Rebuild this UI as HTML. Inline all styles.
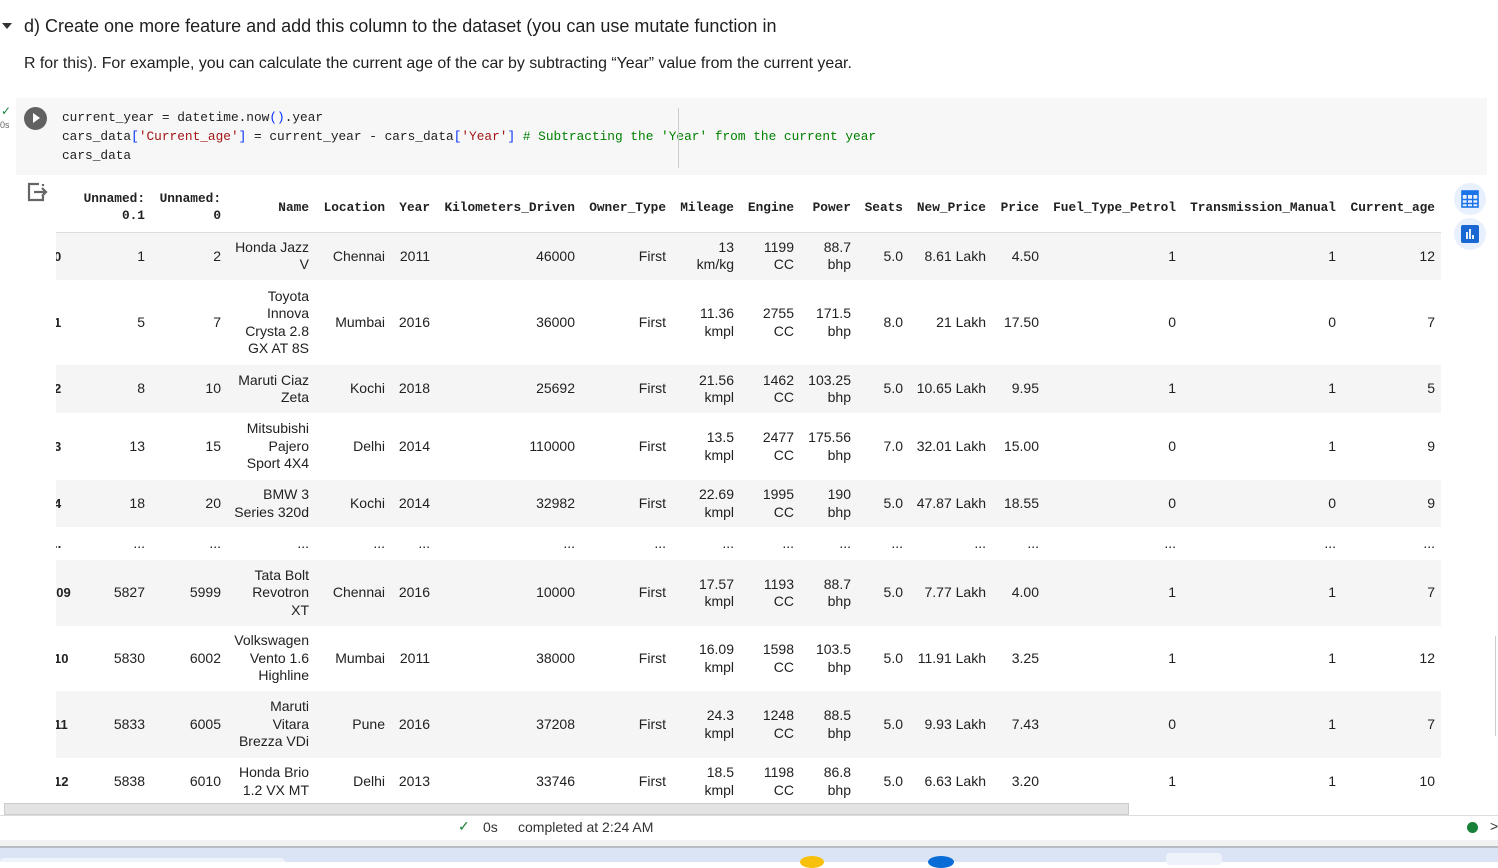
<!DOCTYPE html>
<html><head><meta charset="utf-8"><style>
*{margin:0;padding:0;box-sizing:border-box}
body{width:1498px;height:862px;overflow:hidden;background:#fff;font-family:"Liberation Sans",sans-serif;color:#212121;position:relative}
.abs{position:absolute}
.h1{left:24px;top:16px;font-size:18px;color:#1f1f1f;white-space:nowrap}
.h2{left:24px;top:55px;font-size:15.9px;color:#1f1f1f;white-space:nowrap}
.tri{left:2px;top:23px;width:0;height:0;border-left:5px solid transparent;border-right:5px solid transparent;border-top:6px solid #333}
.code{left:16px;top:98px;width:1471px;height:77px;background:#f7f7f7}
.codetxt{left:62px;top:108px;font-family:"Liberation Mono",monospace;font-size:12.8px;line-height:19px;color:#212121;white-space:pre}
.s{color:#a31515}.b{color:#0431fa}.c{color:#008000}
.vline{left:678px;top:108px;width:1px;height:60px;background:#ccc}
.run{left:24px;top:107px;width:23px;height:23px;border-radius:50%;background:#616161}
.run:after{content:"";position:absolute;left:9px;top:6px;border-left:7px solid #fff;border-top:5.5px solid transparent;border-bottom:5.5px solid transparent}
.tbl{left:56px;top:190px;width:1386px;height:615px;overflow:hidden}
table{border-collapse:collapse;table-layout:fixed;width:1405px;margin-left:-20px}
td,th{text-align:right;vertical-align:middle;padding:0;font-size:14px;line-height:17.5px;white-space:nowrap}
th{font-family:"Liberation Mono",monospace;font-size:12.8px;font-weight:bold;line-height:17px;vertical-align:middle;padding-bottom:7px;border-bottom:1px solid #ddd;color:#212121}
tr.g td{background:#f5f5f5}
td.i{text-align:left;font-weight:bold;padding-left:18px;font-size:13px}
</style></head><body>
<div class="abs tri"></div>
<div class="abs h1">d) Create one more feature and add this column to the dataset (you can use mutate function in</div>
<div class="abs h2">R for this). For example, you can calculate the current age of the car by subtracting “Year” value from the current year.</div>
<div class="abs code"></div>
<div class="abs" style="left:1px;top:104px;color:#188038;font-size:12px">✓</div>
<div class="abs" style="left:0px;top:120px;color:#666;font-size:9px">0s</div>
<div class="abs run"></div>
<div class="abs codetxt">current_year = datetime.now<span class="b">()</span>.year
cars_data<span class="b">[</span><span class="s">'Current_age'</span><span class="b">]</span> = current_year - cars_data<span class="b">[</span><span class="s">'Year'</span><span class="b">]</span> <span class="c"># Subtracting the 'Year' from the current year</span>
cars_data</div>
<div class="abs vline"></div>
<svg class="abs" style="left:26px;top:181px" width="22" height="22" viewBox="0 0 22 22"><path d="M13 3H3v16h14v-4" fill="none" stroke="#666" stroke-width="2.2"/><path d="M17 3v2M8 11h12M16 7l4 4-4 4" fill="none" stroke="#666" stroke-width="2.2"/></svg>
<div class="abs tbl"><table>
<colgroup><col style="width:40px"><col style="width:69px"><col style="width:76px"><col style="width:88px"><col style="width:76px"><col style="width:45px"><col style="width:145px"><col style="width:91px"><col style="width:68px"><col style="width:60px"><col style="width:57px"><col style="width:52px"><col style="width:83px"><col style="width:53px"><col style="width:137px"><col style="width:160px"><col style="width:99px"><col style="width:6px"></colgroup>
<tr style="height:42px"><th></th><th>Unnamed:<br>0.1</th><th>Unnamed:<br>0</th><th>Name</th><th>Location</th><th>Year</th><th>Kilometers_Driven</th><th>Owner_Type</th><th>Mileage</th><th>Engine</th><th>Power</th><th>Seats</th><th>New_Price</th><th>Price</th><th>Fuel_Type_Petrol</th><th>Transmission_Manual</th><th>Current_age</th><th></th></tr>
<tr class="g" style="height:48px"><td class="i">0</td><td>1</td><td>2</td><td>Honda Jazz<br>V</td><td>Chennai</td><td>2011</td><td>46000</td><td>First</td><td>13<br>km/kg</td><td>1199<br>CC</td><td>88.7<br>bhp</td><td>5.0</td><td>8.61 Lakh</td><td>4.50</td><td>1</td><td>1</td><td>12</td><td></td></tr>
<tr style="height:85px"><td class="i">1</td><td>5</td><td>7</td><td>Toyota<br>Innova<br>Crysta 2.8<br>GX AT 8S</td><td>Mumbai</td><td>2016</td><td>36000</td><td>First</td><td>11.36<br>kmpl</td><td>2755<br>CC</td><td>171.5<br>bhp</td><td>8.0</td><td>21 Lakh</td><td>17.50</td><td>0</td><td>0</td><td>7</td><td></td></tr>
<tr class="g" style="height:48px"><td class="i">2</td><td>8</td><td>10</td><td>Maruti Ciaz<br>Zeta</td><td>Kochi</td><td>2018</td><td>25692</td><td>First</td><td>21.56<br>kmpl</td><td>1462<br>CC</td><td>103.25<br>bhp</td><td>5.0</td><td>10.65 Lakh</td><td>9.95</td><td>1</td><td>1</td><td>5</td><td></td></tr>
<tr style="height:67px"><td class="i">3</td><td>13</td><td>15</td><td>Mitsubishi<br>Pajero<br>Sport 4X4</td><td>Delhi</td><td>2014</td><td>110000</td><td>First</td><td>13.5<br>kmpl</td><td>2477<br>CC</td><td>175.56<br>bhp</td><td>7.0</td><td>32.01 Lakh</td><td>15.00</td><td>0</td><td>1</td><td>9</td><td></td></tr>
<tr class="g" style="height:47px"><td class="i">4</td><td>18</td><td>20</td><td>BMW 3<br>Series 320d</td><td>Kochi</td><td>2014</td><td>32982</td><td>First</td><td>22.69<br>kmpl</td><td>1995<br>CC</td><td>190<br>bhp</td><td>5.0</td><td>47.87 Lakh</td><td>18.55</td><td>0</td><td>0</td><td>9</td><td></td></tr>
<tr style="height:33px"><td class="i">..</td><td>...</td><td>...</td><td>...</td><td>...</td><td>...</td><td>...</td><td>...</td><td>...</td><td>...</td><td>...</td><td>...</td><td>...</td><td>...</td><td>...</td><td>...</td><td>...</td><td></td></tr>
<tr class="g" style="height:66px"><td class="i" style="padding-left:13px">209</td><td>5827</td><td>5999</td><td>Tata Bolt<br>Revotron<br>XT</td><td>Chennai</td><td>2016</td><td>10000</td><td>First</td><td>17.57<br>kmpl</td><td>1193<br>CC</td><td>88.7<br>bhp</td><td>5.0</td><td>7.77 Lakh</td><td>4.00</td><td>1</td><td>1</td><td>7</td><td></td></tr>
<tr style="height:65px"><td class="i">10</td><td>5830</td><td>6002</td><td>Volkswagen<br>Vento 1.6<br>Highline</td><td>Mumbai</td><td>2011</td><td>38000</td><td>First</td><td>16.09<br>kmpl</td><td>1598<br>CC</td><td>103.5<br>bhp</td><td>5.0</td><td>11.91 Lakh</td><td>3.25</td><td>1</td><td>1</td><td>12</td><td></td></tr>
<tr class="g" style="height:67px"><td class="i">11</td><td>5833</td><td>6005</td><td>Maruti<br>Vitara<br>Brezza VDi</td><td>Pune</td><td>2016</td><td>37208</td><td>First</td><td>24.3<br>kmpl</td><td>1248<br>CC</td><td>88.5<br>bhp</td><td>5.0</td><td>9.93 Lakh</td><td>7.43</td><td>0</td><td>1</td><td>7</td><td></td></tr>
<tr style="height:47px"><td class="i">12</td><td>5838</td><td>6010</td><td>Honda Brio<br>1.2 VX MT</td><td>Delhi</td><td>2013</td><td>33746</td><td>First</td><td>18.5<br>kmpl</td><td>1198<br>CC</td><td>86.8<br>bhp</td><td>5.0</td><td>6.63 Lakh</td><td>3.20</td><td>1</td><td>1</td><td>10</td><td></td></tr>
</table></div>
<div class="abs" style="left:1454px;top:183px;width:32px;height:32px;border-radius:50%;background:#e8f0fe"></div>
<svg class="abs" style="left:1461px;top:190px" width="18" height="18" viewBox="0 0 18 18"><rect x="1" y="1" width="16" height="16" fill="none" stroke="#1a73e8" stroke-width="1.6"/><rect x="1" y="1" width="16" height="4" fill="#1a73e8"/><path d="M1 9.5h16M1 13.5h16M6.3 5v12M11.7 5v12" stroke="#1a73e8" stroke-width="1.4"/></svg>
<div class="abs" style="left:1454px;top:218px;width:32px;height:32px;border-radius:50%;background:#e8f0fe"></div>
<div class="abs" style="left:1461px;top:225px;width:18px;height:18px;background:#1967d2;border-radius:2px"></div>
<svg class="abs" style="left:1461px;top:225px" width="18" height="18"><path d="M6 7v7M9 4v10M12 10v4" stroke="#fff" stroke-width="1.8"/></svg>
<div class="abs" style="left:4px;top:803px;width:1125px;height:12px;background:#e3e3e3;border:1px solid #ccc"></div>
<div class="abs" style="left:0;top:815px;width:1498px;height:1px;background:#ddd"></div>
<div class="abs" style="left:1495px;top:636px;width:1px;height:100px;background:#ccc"></div>
<div class="abs" style="left:458px;top:818px;font-size:14px;color:#188038">✓</div>
<div class="abs" style="left:483px;top:819px;font-size:14px;color:#333">0s</div>
<div class="abs" style="left:518px;top:819px;font-size:14px;color:#333">completed at 2:24 AM</div>
<div class="abs" style="left:1467px;top:822px;width:11px;height:11px;border-radius:50%;background:#188038"></div>
<div class="abs" style="left:1490px;top:818px;font-size:14px;color:#333">&gt;</div>
<div class="abs" style="left:0;top:840px;width:1498px;height:6px;background:#f1f1f1"></div>
<div class="abs" style="left:0;top:846px;width:1498px;height:2px;background:#b8bcc4"></div>
<div class="abs" style="left:0;top:848px;width:1498px;height:14px;background:#dbe4f4"></div>
<div class="abs" style="left:0;top:858px;width:285px;height:4px;background:#eef2fa;border-radius:4px 4px 0 0"></div>
<div class="abs" style="left:800px;top:856px;width:24px;height:12px;border-radius:50%;background:#f7c00b"></div>
<div class="abs" style="left:928px;top:856px;width:26px;height:12px;border-radius:50%;background:#0a6cd6"></div>
<div class="abs" style="left:1166px;top:853px;width:56px;height:12px;border-radius:4px;background:#eef3fb"></div>
</body></html>
